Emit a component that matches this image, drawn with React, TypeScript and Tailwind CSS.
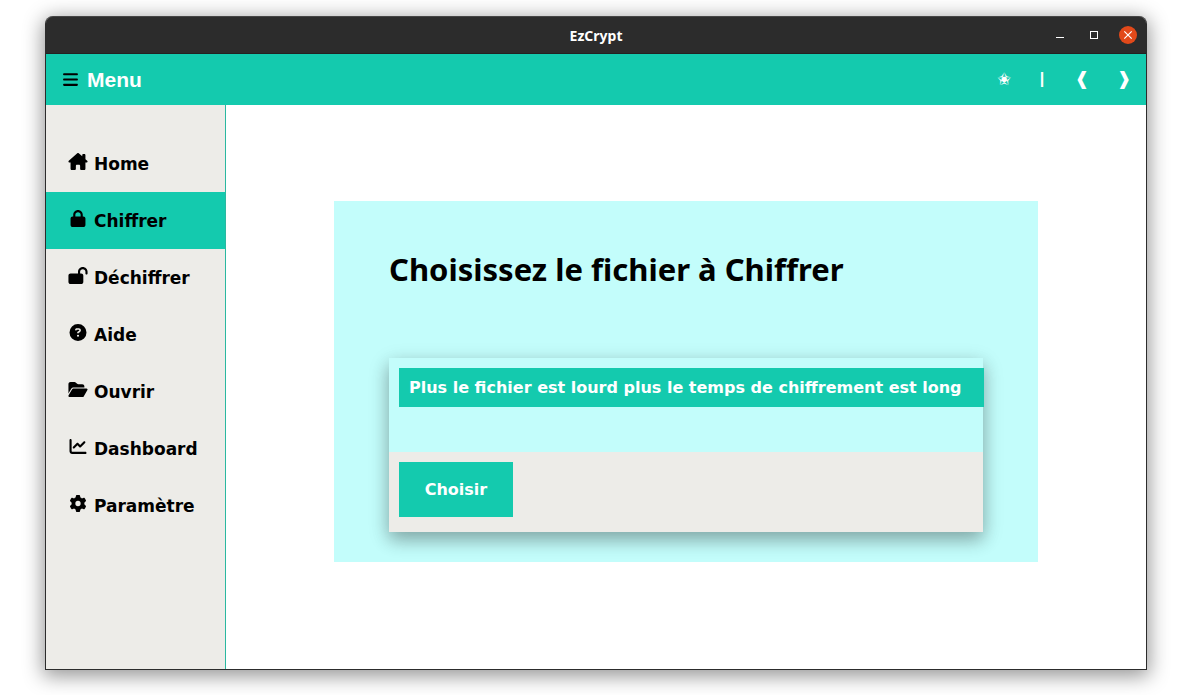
import type { ReactNode } from "react";
import { FaBars, FaHouseChimney, FaLock, FaLockOpen, FaCircleQuestion, FaFolderOpen, FaChartLine, FaGear } from "react-icons/fa6";

const iconSize = "h-[17px] w-5 shrink-0";

const items: { label: string; icon: ReactNode; active?: boolean }[] = [
  { label: "Home", icon: <FaHouseChimney className={iconSize} /> },
  { label: "Chiffrer", icon: <FaLock className={iconSize} />, active: true },
  { label: "Déchiffrer", icon: <FaLockOpen className={iconSize} /> },
  { label: "Aide", icon: <FaCircleQuestion className={iconSize} /> },
  { label: "Ouvrir", icon: <FaFolderOpen className={iconSize} /> },
  { label: "Dashboard", icon: <FaChartLine className={iconSize} /> },
  { label: "Paramètre", icon: <FaGear className={iconSize} /> },
];

function TitleBar() {
  return (
    <div className="grid h-[37px] shrink-0 grid-cols-[1fr_auto_1fr] items-center rounded-t-[7px] border-t border-[#454545] bg-[#2c2c2c] px-[9px] text-white">
      <span />
      <span className="pt-0.5 font-['Noto_Sans',sans-serif] text-[14px] font-bold leading-5">EzCrypt</span>
      <div className="flex items-center justify-end gap-4">
        <button aria-label="Réduire" className="flex size-[18px] items-center justify-center">
          <svg viewBox="0 0 18 18" className="size-[18px]" fill="white" shapeRendering="crispEdges"><rect x="5" y="11" width="8" height="1" /></svg>
        </button>
        <button aria-label="Agrandir" className="flex size-[18px] items-center justify-center">
          <svg viewBox="0 0 18 18" className="size-[18px]" fill="none" stroke="white" shapeRendering="crispEdges"><rect x="5.5" y="5.5" width="7" height="7" /></svg>
        </button>
        <button aria-label="Fermer" className="flex size-[18px] items-center justify-center rounded-full bg-[#e2491a]">
          <svg viewBox="0 0 18 18" className="size-[18px]" fill="none" stroke="white" strokeWidth="1.2"><path d="M5.3 5.3 12.7 12.7M12.7 5.3 5.3 12.7" /></svg>
        </button>
      </div>
    </div>
  );
}

function Toolbar() {
  return (
    <header className="flex h-[51px] shrink-0 items-center justify-between bg-[#14caae] pl-4 pr-[14px] text-white">
      <button className="flex items-center gap-2 text-[21px] font-bold">
        <FaBars className="h-[18px] w-[17px] pb-px text-black" />
        <span className="font-['Liberation_Sans',Arial,sans-serif]">Menu</span>
      </button>
      <div className="flex items-center pb-0.5 text-lg font-bold leading-6">
        <button aria-label="Thème" className="w-4 text-center text-[17px] leading-6">✬</button>
        <span className="ml-[22px] w-4 text-center font-['Liberation_Sans',Arial,sans-serif] text-base leading-6">|</span>
        <button aria-label="Précédent" className="ml-6 w-4 text-center">❰</button>
        <button aria-label="Suivant" className="ml-[26px] w-4 text-center">❱</button>
      </div>
    </header>
  );
}

export default function App() {
  return (
    <div className="flex min-h-screen flex-col bg-white pb-[25px] pl-[45px] pr-11 pt-4 font-['DejaVu_Sans',sans-serif] text-black">
      <div className="flex grow flex-col rounded-t-lg border border-t-0 border-[#2c2c2c] bg-white shadow-[0_4px_20px_2px_rgba(0,0,0,0.42)]">
        <TitleBar />
        <div className="h-px bg-[#222]" />
        <Toolbar />
        <div className="flex grow">
          <nav className="flex w-[180px] shrink-0 flex-col border-r border-[#2bb8a0] bg-[#edece8] pt-[30px]">
            {items.map((item) => (
              <a
                key={item.label}
                href="#"
                className={`flex h-[57px] items-center gap-[6px] pl-[22px] pt-0.5 text-[17px] font-bold ${item.active ? "bg-[#14caae]" : ""}`}
              >
                <span className="flex w-5 justify-center pb-[7px]">{item.icon}</span>
                {item.label}
              </a>
            ))}
          </nav>
          <main className="grow px-[108px] pt-24">
            <section className="bg-[#c3fdfb] px-[55px] pb-[30px] pt-[47px]">
              <h1 className="font-['Noto_Sans',sans-serif] text-[31px] font-bold leading-[42px]">Choisissez le fichier à Chiffrer</h1>
              <div className="mt-[68px] shadow-[0_8px_16px_0_rgba(0,0,0,0.2),0_6px_20px_0_rgba(0,0,0,0.19)]">
                <div className="h-[94px] bg-[#c3fdfb] pl-[10px] pt-[10px]">
                  <p className="-mr-px bg-[#14caae] p-[10px] text-base font-bold leading-[19px] text-white">
                    Plus le fichier est lourd plus le temps de chiffrement est long
                  </p>
                </div>
                <div className="bg-[#edece8] px-[10px] pb-[15px] pt-[10px]">
                  <button className="block h-[55px] w-[114px] bg-[#14caae] text-base font-bold text-white">Choisir</button>
                </div>
              </div>
            </section>
          </main>
        </div>
      </div>
    </div>
  );
}
